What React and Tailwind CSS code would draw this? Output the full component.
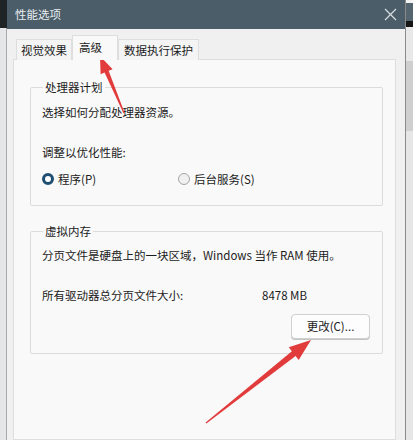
import React from "react";

const font = { fontFamily: '"Noto Sans CJK SC", "Noto Sans", sans-serif' };

// polygon points for a tapered red arrow, from tail to tip
const arrowPoints = (tail, tip, headLen, headW, shaftW) => {
  const dx = tip[0] - tail[0];
  const dy = tip[1] - tail[1];
  const len = Math.hypot(dx, dy);
  const ux = dx / len;
  const uy = dy / len;
  const nx = -uy;
  const ny = ux;
  const bx = tip[0] - ux * headLen;
  const by = tip[1] - uy * headLen;
  const pts = [
    [tail[0] + nx * 0.6, tail[1] + ny * 0.6],
    [bx + nx * shaftW, by + ny * shaftW],
    [bx + nx * headW, by + ny * headW],
    tip,
    [bx - nx * headW, by - ny * headW],
    [bx - nx * shaftW, by - ny * shaftW],
    [tail[0] - nx * 0.6, tail[1] - ny * 0.6],
  ];
  return pts.map((p) => p.join(",")).join(" ");
};

const Radio = ({ checked, label }) => (
  <label className="flex items-center gap-[4px]">
    {checked ? (
      <span className="w-[12px] h-[12px] rounded-full border-[3px] border-[#1d4f73] bg-white" />
    ) : (
      <span className="w-[12px] h-[12px] rounded-full border border-[#a5a5a5] bg-[#f0f0f0]" />
    )}
    <span>{label}</span>
  </label>
);

const App = () => {
  return (
    <div
      className="relative w-[413px] h-[440px] overflow-hidden flex bg-[#e2e2e2] text-[11.5px] text-[#1b1b1b]"
      style={font}
    >
      {/* left background strip */}
      <div className="w-[7px] flex flex-col">
        <div className="h-[28px] bg-[#1e2326]" />
        <div className="flex-1 bg-[#e4e6e8] border-r border-[#a9a9a9]" />
      </div>

      {/* dialog */}
      <div className="w-[398px] flex flex-col">
        <div className="h-[29px] bg-[#4a5d69] flex items-center justify-between pl-[8px] pr-[8px]">
          <span className="text-[#e9eef0]">性能选项</span>
          <svg width="13" height="13" viewBox="0 0 13 13">
            <path d="M1 1 L12 12 M12 1 L1 12" stroke="#d6dde1" strokeWidth="1.2" />
          </svg>
        </div>

        <div className="flex-1 bg-[#f0f0f0] flex flex-col pl-[6px] pr-[9px] pt-[6px]">
          {/* tabs */}
          <div className="flex items-end h-[25px] pl-[3px] -mb-px relative z-10">
            <div className="h-[21px] px-[4px] pt-px flex items-center bg-[#f4f4f4] border border-b-0 border-[#dedede]">
              视觉效果
            </div>
            <div className="h-[25px] w-[46px] px-[6px] pb-px flex items-center bg-[#f9f9f9] border border-b-0 border-[#dedede]">
              高级
            </div>
            <div className="h-[21px] px-[5px] pt-px flex items-center bg-[#f4f4f4] border border-b-0 border-[#dedede]">
              数据执行保护
            </div>
          </div>

          {/* tab panel */}
          <div className="flex-1 bg-[#f9f9f9] border border-[#dedede] pl-[16px] pr-[12px] pt-[19px]">
            <fieldset className="border border-[#dcdcdc] rounded-[2px] pl-[11px] pr-[11px] h-[127px]">
              <legend className="px-[2px] ml-px leading-[16px]">处理器计划</legend>
              <div className="mt-[9px] leading-[16px]">选择如何分配处理器资源。</div>
              <div className="mt-[24px] leading-[16px]">调整以优化性能:</div>
              <div className="mt-[11px] flex leading-[16px]">
                <div className="w-[136px]">
                  <Radio checked label="程序(P)" />
                </div>
                <Radio label="后台服务(S)" />
              </div>
            </fieldset>

            <fieldset className="mt-[17px] border border-[#dcdcdc] rounded-[2px] pl-[11px] pr-[12px] h-[131px]">
              <legend className="px-[2px] ml-px leading-[16px]">虚拟内存</legend>
              <div className="mt-[8px] leading-[16px]">分页文件是硬盘上的一块区域，Windows 当作 RAM 使用。</div>
              <div className="mt-[24px] flex leading-[16px]">
                <span className="w-[220px]">所有驱动器总分页文件大小:</span>
                <span>8478 MB</span>
              </div>
              <div className="mt-[11px] flex justify-end">
                <button className="w-[79px] h-[25px] bg-[#fdfdfd] border border-[#d0d0d0] rounded-[4px] shadow-[0_1px_0_#c4c4c4] text-[11.5px]">
                  更改(C)...
                </button>
              </div>
            </fieldset>
          </div>
        </div>
      </div>

      {/* right background strip */}
      <div className="w-[8px] flex flex-col border-l border-[#8a8a8a]">
        <div className="h-[3px] bg-[#f2f2f2]" />
        <div className="h-[18px] bg-[#55656f]" />
        <div className="h-[6px] bg-[#151515]" />
        <div className="h-[34px] bg-[#e8e8e8]" />
        <div className="h-[70px] bg-[#cfcfcf]" />
        <div className="flex-1 bg-[#e6e6e6]" />
      </div>

      {/* red annotation arrows */}
      <svg className="absolute inset-0 pointer-events-none" width="413" height="440">
        <polygon points={arrowPoints([124, 113], [100, 56], 17, 6.5, 2.2)} fill="#e23b3b" />
        <polygon points={arrowPoints([206, 423], [311, 340], 22, 8, 3)} fill="#e23b3b" />
      </svg>
    </div>
  );
};

export default App;
